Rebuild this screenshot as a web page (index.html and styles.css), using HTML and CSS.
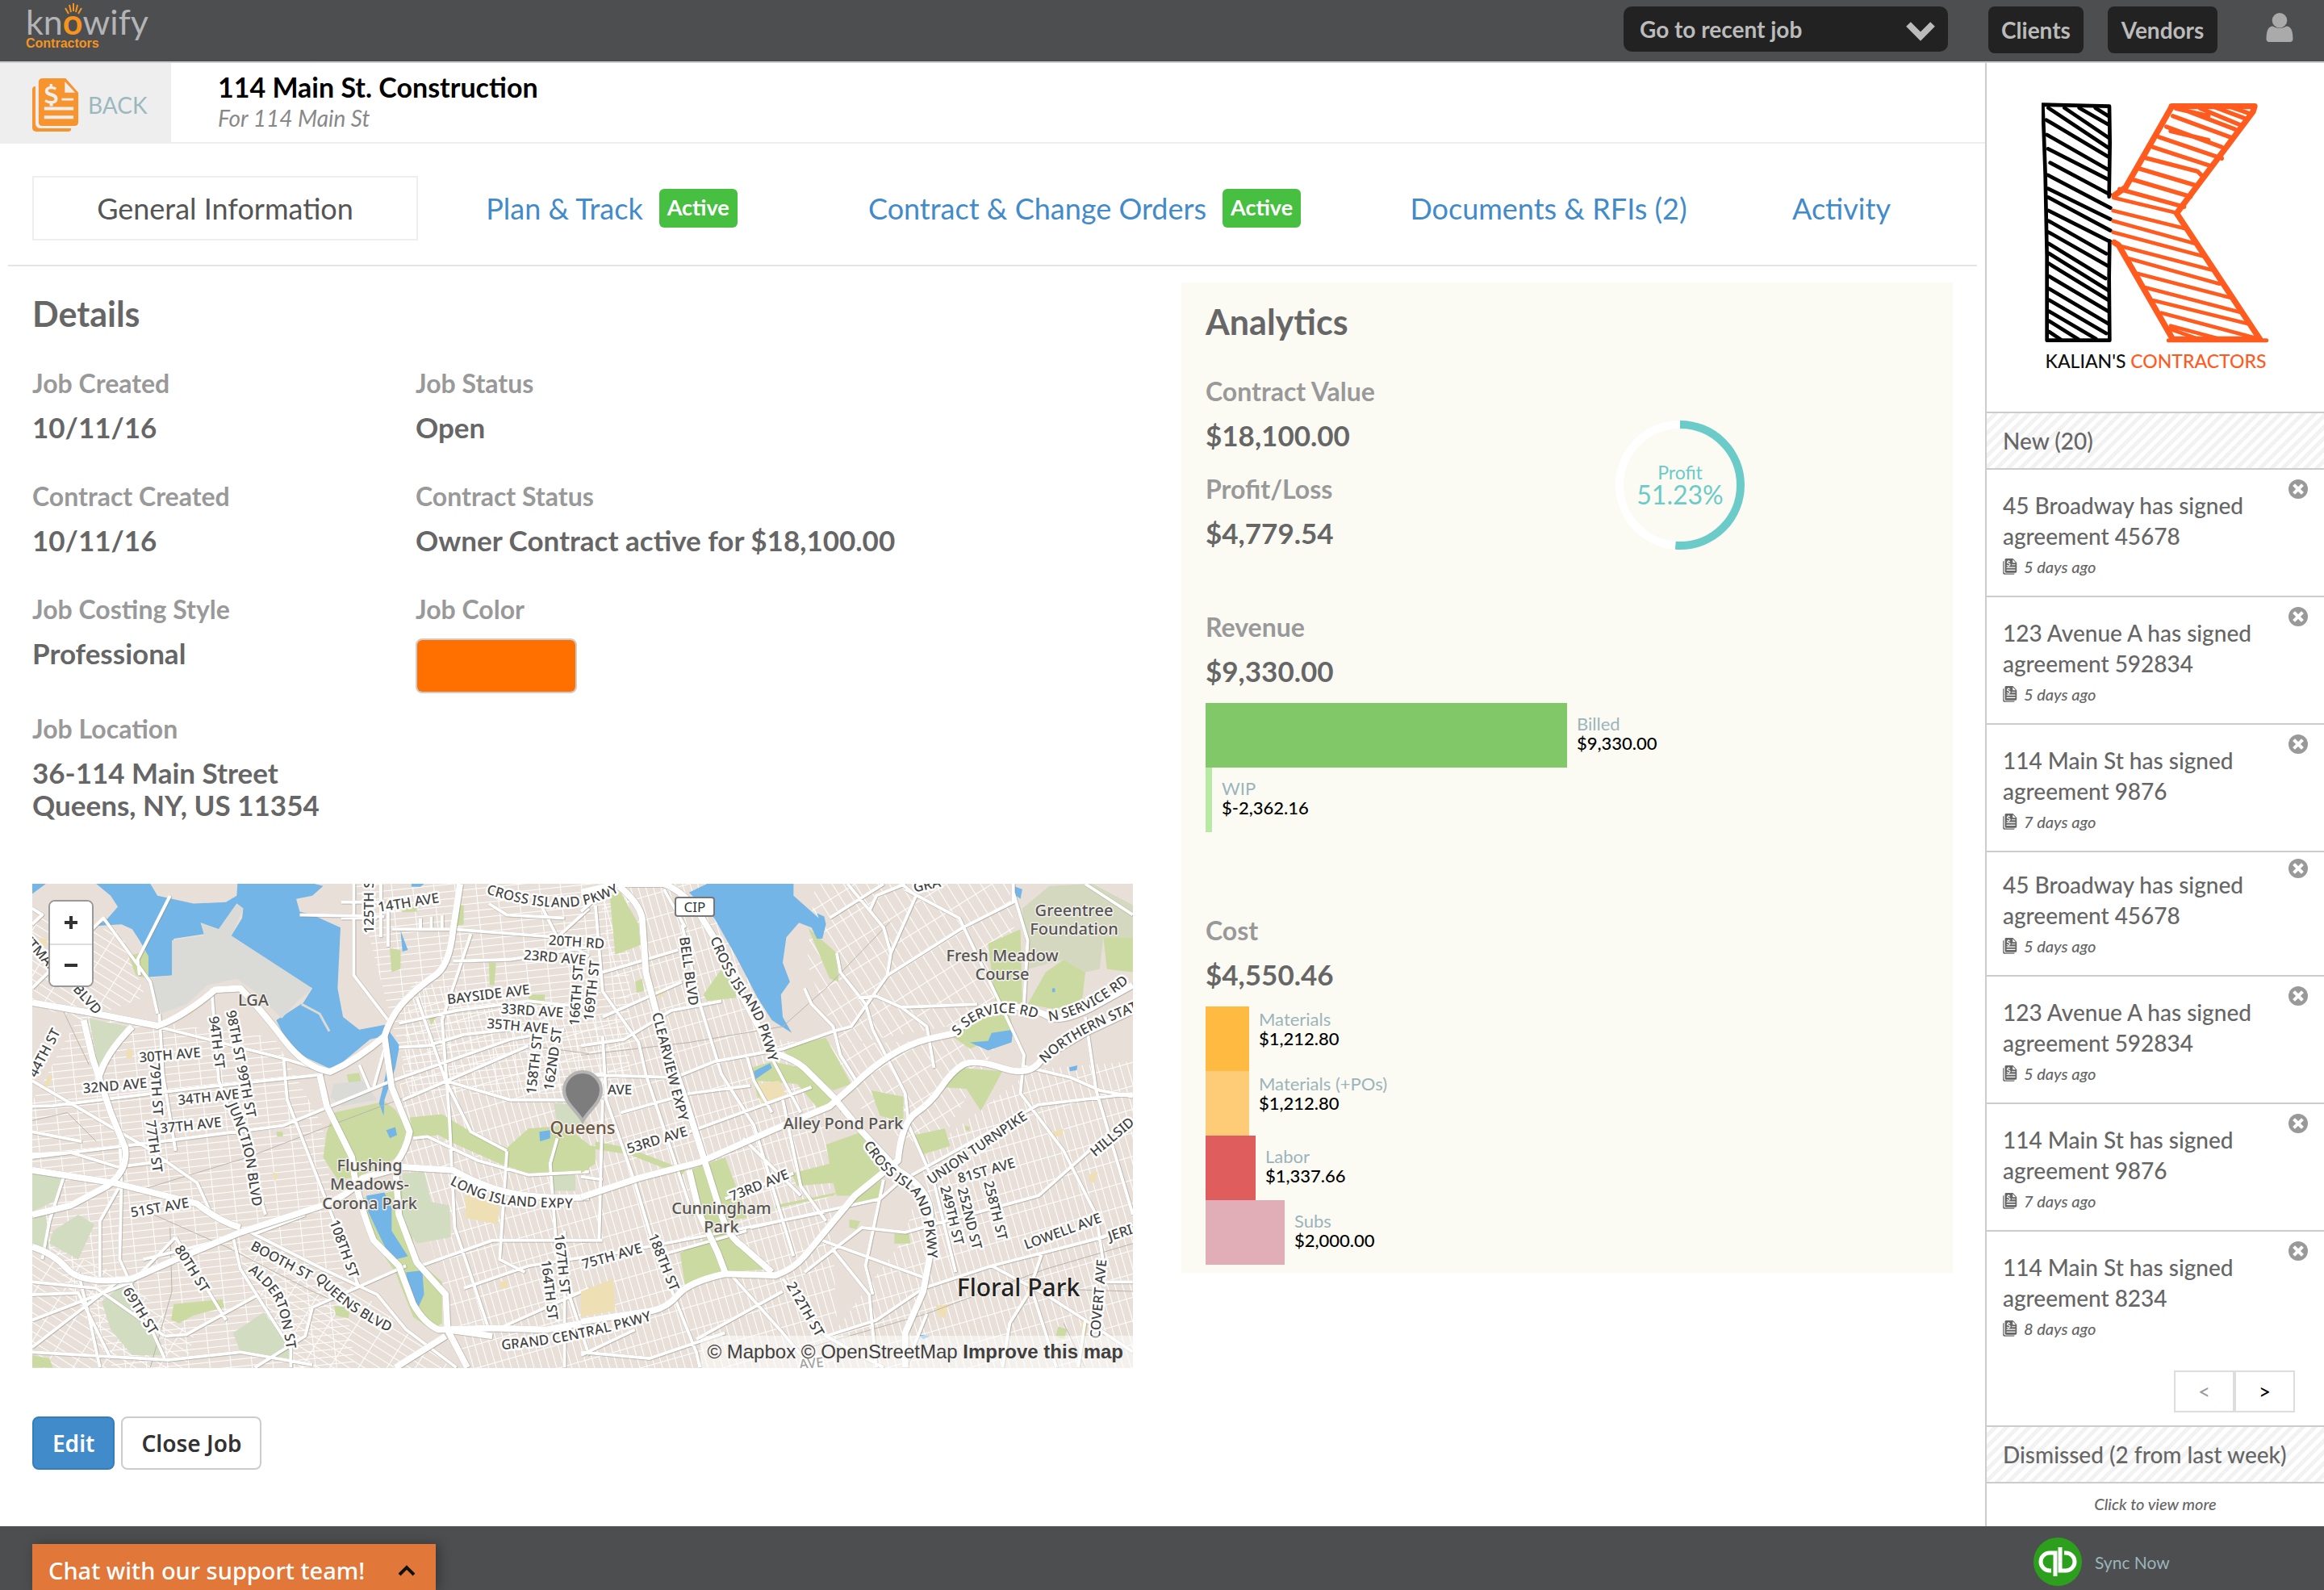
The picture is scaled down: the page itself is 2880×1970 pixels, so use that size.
FILE: index.html
```html
<!DOCTYPE html>
<html lang="en">
<head>
<meta charset="utf-8">
<title>114 Main St. Construction - Knowify</title>
<link rel="stylesheet" href="styles.css">
</head>
<body>
<svg class="defs" aria-hidden="true">
  <symbol id="doc" viewBox="0 0 60 68">
    <path d="M4 10v46q0 7 7 7h38v1q0 3-4 3H5q-5 0-5-5V14q0-4 4-4z"/>
    <path fill-rule="evenodd" d="M13 0h29l16 18v37q0 5-5 5H13q-5 0-5-5V5q0-5 5-5zM41 4v14h13zM37 25v3h15v-3zM15 36v4h37v-4zM15 47v4h37v-4zM22 7v3q-6 1-6 6 0 5 7 6.500 5 1.500 5 3.500 0 2.500-4 2.500t-7-2l-1.500 3q3 2 6.500 2.500v3h4v-3q6-1 6-6.500 0-5-7-7-5-1-5-3 0-2 3.500-2t5.500 1.500l1.500-3q-2-1.500-5-2v-3z"/>
  </symbol>
  <symbol id="close" viewBox="0 0 24 24">
    <circle cx="12" cy="12" r="12" fill="#999"/>
    <path d="M8 8l8 8M16 8l-8 8" stroke="#fff" stroke-width="4" stroke-linecap="square"/>
  </symbol>
</svg>

<header class="topbar">
  <a class="brand" href="#" aria-label="Knowify Contractors">
    <span class="brand-name">kn<span class="brand-o">o<svg class="brand-rays" viewBox="0 0 24 14"><path d="M2 6l4 7M7 2l2 9M12 0v10M17 2l-2 9M22 6l-4 7" stroke="#f7941e" stroke-width="2" fill="none"/></svg></span>wify</span>
    <span class="brand-sub">Contractors</span>
  </a>
  <nav class="topnav">
    <div class="jobs">
      <select class="jobs-select" aria-label="Go to recent job"><option>Go to recent job</option></select>
      <svg class="jobs-arrow" viewBox="0 0 36 24"><path d="M3 3l15 15L33 3" fill="none" stroke="#bbb" stroke-width="8"/></svg>
    </div>
    <button class="topbtn clients">Clients</button>
    <button class="topbtn vendors">Vendors</button>
    <a class="user" href="#" aria-label="Account"><svg viewBox="0 0 32 35"><path d="M0 32c0-8 1-16 8-16 4 3 12 3 16 0 7 0 8 8 8 16 0 2-2 3-4 3H4c-2 0-4-1-4-3z"/><ellipse cx="16" cy="9" rx="9" ry="9"/></svg></a>
  </nav>
</header>

<div class="page">
  <main class="main">
    <div class="jobhead">
      <a class="back" href="#"><svg class="back-icon"><use href="#doc"/></svg>BACK</a>
      <div class="jobtitle">
        <h1>114 Main St. Construction</h1>
        <p>For 114 Main St</p>
      </div>
    </div>

    <nav class="tabs">
      <a class="tab tab-on" href="#">General Information</a>
      <a class="tab" href="#">Plan &amp; Track <span class="badge">Active</span></a>
      <a class="tab" href="#">Contract &amp; Change Orders <span class="badge">Active</span></a>
      <a class="tab" href="#">Documents &amp; RFIs (2)</a>
      <a class="tab" href="#">Activity</a>
    </nav>

    <div class="columns">
      <section class="details">
        <h2>Details</h2>
        <dl class="facts">
          <div><dt>Job Created</dt><dd>10/11/16</dd></div>
          <div><dt>Job Status</dt><dd>Open</dd></div>
          <div><dt>Contract Created</dt><dd>10/11/16</dd></div>
          <div><dt>Contract Status</dt><dd>Owner Contract active for $18,100.00</dd></div>
          <div><dt>Job Costing Style</dt><dd>Professional</dd></div>
          <div><dt><label for="color">Job Color</label></dt><dd><input class="swatch" id="color" type="color" value="#ff7000"></dd></div>
        </dl>
        <dl class="location"><dt>Job Location</dt><dd>36-114 Main Street<br>Queens, NY, US 11354</dd></dl>

        <div class="map">
          <svg class="map-art" viewBox="0 0 1364 600" preserveAspectRatio="xMidYMid slice">
            <defs>
              <pattern id="g1" width="26" height="9" patternUnits="userSpaceOnUse" patternTransform="rotate(-6)"><path d="M0 0H26M0 0V9" stroke="#fff" stroke-width="2" fill="none"/></pattern>
              <pattern id="g2" width="9" height="28" patternUnits="userSpaceOnUse" patternTransform="rotate(-16)"><path d="M0 0H9M0 0V28" stroke="#fff" stroke-width="2" fill="none"/></pattern>
              <pattern id="g3" width="30" height="10" patternUnits="userSpaceOnUse" patternTransform="rotate(32)"><path d="M0 0H30M0 0V10" stroke="#fff" stroke-width="2" fill="none"/></pattern>
              <pattern id="g4" width="12" height="30" patternUnits="userSpaceOnUse" patternTransform="rotate(-32)"><path d="M0 0H12M0 0V30" stroke="#fff" stroke-width="2" fill="none"/></pattern>
            </defs>
            <rect width="1364" height="600" fill="#e8e0d8"/>
            <!-- side-street grids -->
            <path fill="url(#g1)" d="M60 160L300 190 360 300 400 600H100L0 420V270zM400 0H740V260H470L440 150z"/>
            <path fill="url(#g2)" d="M470 120L740 170 980 200 1000 600H540L450 300zM700 0H860L920 220H740z"/>
            <path fill="url(#g3)" d="M0 40L110 60 140 140 60 170 0 150zM0 440L100 480 200 560 190 600H0zM240 440L400 500 520 600H330z"/>
            <path fill="url(#g4)" d="M970 0L1210 0 1230 160 1000 200 960 100zM980 200L1200 190 1120 330 1040 300z"/>
            <path fill="url(#g2)" d="M1110 330L1240 230 1364 220V600H960L1080 440z"/>

            <!-- western half -->
            <g class="geo" transform="translate(-10 -9) scale(.4464 .3954)">
              <g class="park">
                <path d="M860 740L1000 705 1030 730 1070 800 1050 870 1020 890 930 940 870 950 830 880 840 800zM1070 755L1160 745 1240 800 1340 850 1400 790 1500 780 1568 840V930H1400L1320 900 1200 840 1150 810 1080 820z"/>
                <path d="M930 1010L1050 980 1090 1200 1160 1270V1400L1130 1420 1080 1380 1030 1240 970 1140zM415 1340L550 1325 555 1350 470 1375 430 1400 408 1390zM1015 225L1045 230V290L1020 300zM1290 270H1310L1305 340H1292zM290 250L345 230 345 320 310 310zM1120 435L1150 430 1130 465zM895 620L930 615 940 660 910 685zM860 1345L905 1350 900 1385 865 1375zM700 800H718V815H702zM22 1500L70 1510 80 1539H22zM1400 370H1445V390H1400zM1220 90V150L1200 155 1205 90zM1040 85L1090 90V110L1050 112z"/>
              </g>
              <g class="cemetery">
                <path d="M180 445L285 470 230 560 205 590zM22 930L110 940 100 1010 22 1050zM22 1055L60 1050 70 1180 22 1150zM80 1110L150 1060 195 1090 150 1200 70 1150zM215 1330L275 1280 380 1460V1500H300L240 1420zM580 1430L665 1365 740 1480 735 1510 600 1490zM1050 930L1110 925 1130 1020 1180 1030 1185 1130 1090 1150 1050 1080zM1465 935H1530V985H1465zM1470 710L1530 715 1568 780H1480z"/>
              </g>
              <path class="sand" d="M1225 990L1320 1010 1315 1090 1225 1070zM45 190L65 200 55 220 42 212zM285 540H300V570H283zM690 925L708 935 695 955zM1320 1270L1345 1265 1340 1290 1322 1292zM65 625H80L65 660 55 658zM440 415L470 410V430H442z"/>
              <path class="water" d="M200 23L240 60 260 95 225 140 195 155 270 150 300 165 320 200 345 250V315L410 310 415 195 500 180 490 145 540 165 590 85 608 100 605 130 575 185 620 240 800 350 775 395 700 450 740 545 845 600 870 595 960 510 1000 500 1015 560 1000 640 985 710 998 750 1000 700 1030 600 1042 530 1010 480 1000 465 930 480 885 440 870 350 878 160 800 120 765 110 755 70 800 60 830 30 805 23z"/>
              <path class="water" d="M950 1000L1000 990 1020 1040V1110L1065 1190 1030 1200 1010 1180 980 1110 955 1050zM1060 1240L1105 1235 1110 1310 1090 1360 1070 1310zM1005 795L1030 785 1035 810 1015 820zM1430 800L1460 795V820L1432 830zM22 23H60L22 55zM1045 170L1065 230 1050 235zM1075 23H1110L1100 32H1075z"/>
              <path class="land" d="M350 23L370 60 470 85 560 80 590 60 592 23z"/>
              <path class="airport" d="M410 200L500 185 490 145 540 165 590 85 608 100 575 185 800 350 750 400 715 445 640 360 590 320 510 340 450 400 380 430 350 320 410 310z"/>
              <path class="airport" d="M860 650L940 640 980 700 880 720 850 690z"/>
              <path class="pier" d="M770 400L820 430 847 485"/>
              <path class="rail" d="M22 765L120 740 200 830M330 980L620 880 920 750 1180 640 1400 530 1568 555M340 1050L560 1160 800 1300 980 1390M110 425L180 590M405 1100L410 1300 350 1539"/>
              <g class="minor">
                <path d="M22 720L80 718 460 665 830 620M22 880L380 830 720 780 1020 640 1350 510 1500 480M370 470L720 570 850 615M375 430L385 620 420 860M520 350L540 640 640 950 670 1060M720 570L730 700 850 1050 930 1290M22 640L340 850 480 960 520 1060M22 350L220 130 350 330 370 430M22 100L50 120 22 150M320 310L315 260 405 60M915 23V310L1010 450M765 120L1000 125M1020 165H1190L1480 190 1568 250M1190 265L1350 260 1568 220M1040 460L1200 420 1400 390 1568 410M1040 535L1120 530 1220 495 1420 470M1090 380L1170 640 1240 800 1340 860M1170 640L1350 700H1568M1080 820L1120 815 1260 890 1400 935 1568 925M1240 180L1160 450 1180 750 1195 1100 1290 1420M1340 860L1320 1200 1390 1240M1480 820L1460 900 1480 1200 1568 1500M1050 700L1400 530M970 660L1000 540M930 590L960 670M1100 1220L1300 1140 1568 1140M1220 1290L1400 1220 1568 1190M1310 1420L1568 1290M580 1130L600 1230 740 1480V1539M620 1110L830 1230 980 1310 1060 1420 1200 1539M22 1490L400 1515 600 1490 800 1530M22 1390L300 1270 420 1130M22 1270L200 1290 390 1440M50 1200L70 1080 110 940M210 1260V1080L270 960 265 820M22 1475L270 1260M270 960L265 1200 390 1510M420 1130L560 1390M390 1440L450 1435 650 1310M640 1539L780 1440 800 1350 1060 1220M150 1240L180 1380 210 1539M22 1310L150 1305 240 1510M1290 85L1340 120 1500 130M1430 80L1480 190M1480 190L1568 100M22 870L130 865 260 910 400 890M22 800L160 830M1500 1110V1539M330 1200L580 1130M640 1120L780 1060M880 80H1000M880 130H980M990 23V190M1010 100V220M1100 130V160M1130 125V160M1160 120V160"/>
              </g>
              <g class="hw">
                <path d="M22 395L200 430 370 468Q440 440 530 355L600 350Q660 420 720 510T850 612Q930 570 1000 500 1020 430 1060 385T1140 310 1190 170L1210 23"/>
                <path d="M22 920L250 960 480 1025Q540 1080 600 1100M22 1160Q80 1180 120 1230T300 1260L420 1200 600 1115 830 1030Q900 1000 940 945L1050 910 1190 920Q1300 990 1400 1000T1568 1005"/>
                <path d="M1000 500L1020 660 1070 800Q1060 860 1030 900L1040 1060 1090 1210 1170 1310 1175 1420 1230 1539"/>
                <path d="M820 620L840 720 910 880Q920 1000 970 1140L1040 1220 1080 1340Q1110 1400 1150 1420L1300 1415 1450 1420 1568 1395"/>
                <path d="M22 1060L130 1030 230 970Q290 920 280 850L240 740 190 570 165 450M205 640Q220 560 300 470"/>
                <path d="M1030 1539L1170 1440M1175 1420L1300 1440"/>
              </g>
            </g>
            <!-- eastern half -->
            <g class="geo" transform="translate(680 -9) scale(.4464 .3954)">
              <g class="park">
                <path d="M555 540L680 505 750 650 700 670 620 600zM470 600L530 580 620 600 700 700 660 730 600 650 490 640 530 740 490 690zM680 840L780 800 870 890 760 1000 710 1000 700 960 600 970 585 930 690 900zM80 60L110 50 160 150 165 215 95 245zM300 920L400 880 440 1000 460 1070 400 1080 430 1130 530 1230 400 1240 290 1290 275 1180 355 1130zM40 830L130 850 290 920 280 935 130 870 40 855z"/>
                <path d="M1130 210L1220 165 1225 400 1150 390zM1290 300L1340 260 1400 300 1390 400 1310 415 1240 400zM1450 190H1532V300L1460 290zM1030 500L1080 430H1190L1200 480 1080 540zM1000 660L1060 600 1170 610 1110 735 1070 665zM805 670L895 690V770L830 750zM925 810L1010 790 1025 845 950 870zM340 370L390 290 430 320V380L350 390zM630 160L710 240 715 330 690 320zM540 1030L710 990 700 1000 540 1040zM870 1120H910L915 1150H870zM745 1075L775 1080 765 1105 745 1100zM0 840L40 845V900L0 930zM1065 780L1080 785 1078 797 1068 795zM1325 1410L1350 1420 1340 1450 1318 1440zM740 1030L835 950 830 1005zM150 330L170 320 175 360 155 365z"/>
              </g>
              <path class="golf" d="M1225 100L1300 30 1420 23 1532 90V190L1450 190 1440 290 1400 300 1340 260 1240 290z"/>
              <path class="sand" d="M490 650L550 640 570 690 500 710zM0 1300L90 1260 95 1360 0 1380zM210 350L235 360 225 378 208 372zM985 1345L1020 1340 1010 1385 990 1375zM1310 800L1340 790 1335 810 1312 818zM1415 930L1435 925 1425 960 1408 955zM1390 1390L1410 1400 1400 1440H1388z"/>
              <path class="water" d="M300 50L350 23H590V60L660 130 655 115 675 125 680 150 670 195 655 195 640 160 605 145 570 190 560 270 580 330 555 370 560 440 585 490 530 450 490 380 430 250 370 130zM480 610L525 585 530 600 485 635zM1080 520L1130 515 1140 490 1200 480 1195 520 1130 545zM1355 598L1378 592 1376 607 1357 610zM1200 30L1225 40 1220 70 1208 60zM718 710L730 730 720 738zM935 1435L970 1440 950 1450zM1308 350H1316V362H1308z"/>
              <path class="rail" d="M0 560L300 520 560 470 680 350 860 140M620 1480L960 1370 1290 1230 1532 1150M1240 1290L1532 1300M1400 1539L1340 1400"/>
              <g class="minor">
                <path d="M0 530L120 510 250 420 390 390M60 300L270 230M40 90L60 360 160 520 180 620 310 1060M0 620L260 630 370 580 560 540 700 485 750 470 850 310 860 240 840 160 740 23M60 440L280 330M280 150L330 400 390 620 480 780 590 1190M110 740L300 680 470 655M460 560L480 640 530 740M530 570L610 740M300 800L640 660M400 1010L590 930M0 940L60 950M60 500L70 700 150 960 200 1150 320 1490 330 1539M470 1100L830 1010 880 960M0 1140L60 1140M60 700L50 1140M0 1200L370 1120 680 1050M240 1180L460 1110M450 820L610 1000M560 700L610 970 680 1080M150 1420L0 1500M320 1450L560 1300M410 1240L560 1430 640 1539M560 1260L680 1440 840 1539M620 1240L780 1100 900 1115 1010 1080 1270 1000 1440 830 1532 760M670 1140L960 1260M680 1440L820 1390 950 1290 1140 1220 1450 1130 1532 1090M840 950L790 1220 810 1310M700 1170L800 1310 820 1539M620 350L640 400 700 470 720 560 770 650M710 240L720 300 790 400 810 480 900 680 910 780 980 960 1040 1240M690 130L840 23M860 240L930 60 890 23M850 310L1060 160 1200 80 1200 23M900 40L1050 130 1160 390M770 380L820 375 890 410 1100 400M890 410L960 470 980 600M1200 50L1240 200 1230 400M1160 390L1230 560 1220 680 1340 860 1430 1060 1450 1210M1230 740L1270 715 1532 680M1230 595L1360 630 1440 670 1532 690M1400 440L1430 670 1532 1060M880 960L1230 740M1140 1220L1290 1310 1400 1390 1532 1490M1280 1180L1240 1310 1190 1400 1170 1539M1250 1290L1320 1539M1400 1390L1380 1539M900 1539L960 1370M1400 23L1532 120M1450 1270H1532M800 110L820 60 900 23M230 40L290 160M0 110L50 60M0 1490L190 1510 400 1430"/>
              </g>
              <g class="hw">
                <path d="M0 1005L160 945 330 895 540 790 690 720 760 650Q860 540 960 510L1040 490Q1090 430 1130 415T1220 410 1300 440 1420 410L1532 340"/>
                <path d="M0 1395L200 1360Q240 1350 270 1310T400 1245L540 1250Q590 1230 620 1190L760 1000 880 890Q890 770 930 740T1000 660 1060 590 1170 600 1280 570L1400 490 1532 420"/>
                <path d="M105 30Q160 80 170 130L180 300 215 450 290 700 340 880 390 1060Q410 1130 450 1160L530 1240M300 920L330 1060 380 1180 400 1240"/>
                <path d="M0 50L105 23H230Q290 50 330 120L390 230 450 380 530 550Q590 570 620 600L700 690 780 800 880 920Q970 980 970 1060V1180L950 1300 900 1430V1539"/>
              </g>
            </g>

            <defs>
              <path id="t1" d="M562 12Q615 29 655 29T730 8"/>
              <path id="t2" d="M242 274Q262 320 266 352T274 402"/>
              <path id="t3" d="M517 372Q560 396 600 399T685 402"/>
              <path id="t4" d="M267 480Q300 505 306 530T315 575"/>
              <path id="t5" d="M350 489Q390 535 460 563"/>
              <path id="t6" d="M582 577Q660 572 770 540"/>
              <path id="t7" d="M768 161L808 320"/>
              <path id="t8" d="M840 68Q860 120 880 142T916 235"/>
              <path id="t9" d="M1030 323Q1052 360 1080 375T1110 470"/>
              <path id="t10" d="M1114 373L1250 280"/>
              <path id="t11" d="M1255 223Q1292 184 1384 152"/>
              <path id="t12" d="M1147 189Q1183 145 1248 168"/>
              <path id="t13" d="M1260 170Q1310 164 1366 116"/>
            </defs>
            <g class="street">
              <text><textPath href="#t1">CROSS ISLAND PKWY</textPath></text>
              <text><textPath href="#t2">JUNCTION BLVD</textPath></text>
              <text><textPath href="#t3">LONG ISLAND EXPY</textPath></text>
              <text><textPath href="#t4">ALDERTON ST</textPath></text>
              <text><textPath href="#t5">QUEENS BLVD</textPath></text>
              <text><textPath href="#t6">GRAND CENTRAL PKWY</textPath></text>
              <text><textPath href="#t7">CLEARVIEW EXPY</textPath></text>
              <text><textPath href="#t8">CROSS ISLAND PKWY</textPath></text>
              <text><textPath href="#t9">CROSS ISLAND PKWY</textPath></text>
              <text><textPath href="#t10">UNION TURNPIKE</textPath></text>
              <text><textPath href="#t11">NORTHERN STATE</textPath></text>
              <text><textPath href="#t12">S SERVICE RD</textPath></text>
              <text><textPath href="#t13">N SERVICE RD</textPath></text>
              <g text-anchor="middle">
                <text transform="translate(423 24) rotate(-90)">125TH ST</text>
                <text transform="translate(467 29) rotate(-9)">14TH AVE</text>
                <text transform="translate(674 78) rotate(4)">20TH RD</text>
                <text transform="translate(647 97) rotate(5)">23RD AVE</text>
                <text transform="translate(566 143) rotate(-7)">BAYSIDE AVE</text>
                <text transform="translate(619 163) rotate(4)">33RD AVE</text>
                <text transform="translate(601 182) rotate(5)">35TH AVE</text>
                <text transform="translate(680 139) rotate(-86)">166TH ST</text>
                <text transform="translate(699 133) rotate(-84)">169TH ST</text>
                <text transform="translate(628 224) rotate(-84)">158TH ST</text>
                <text transform="translate(651 218) rotate(-82)">162ND ST</text>
                <text transform="translate(223 197) rotate(83)">94TH ST</text>
                <text transform="translate(253 224) rotate(79)">98TH ST 99TH ST</text>
                <text transform="translate(171 218) rotate(-5)">30TH AVE</text>
                <text transform="translate(103 256) rotate(-5)">32ND AVE</text>
                <text transform="translate(219 270) rotate(-6)">34TH AVE</text>
                <text transform="translate(197 305) rotate(-6)">37TH AVE</text>
                <text transform="translate(148 255) rotate(86)">79TH ST</text>
                <text transform="translate(145 326) rotate(82)">77TH ST</text>
                <text transform="translate(20 212) rotate(-62)">44TH ST</text>
                <text transform="translate(6 90) rotate(48)">DITMARS</text>
                <text transform="translate(64 147) rotate(48)">BLVD</text>
                <text transform="translate(159 407) rotate(-10)">51ST AVE</text>
                <text transform="translate(193 480) rotate(58)">80TH ST</text>
                <text transform="translate(129 532) rotate(58)">69TH ST</text>
                <text transform="translate(306 472) rotate(28)">BOOTH ST</text>
                <text transform="translate(381 454) rotate(70)">108TH ST</text>
                <text transform="translate(651 472) rotate(84)">167TH ST</text>
                <text transform="translate(635 504) rotate(83)">164TH ST</text>
                <text transform="translate(720 467) rotate(-16)">75TH AVE</text>
                <text transform="translate(777 471) rotate(68)">188TH ST</text>
                <text transform="translate(953 530) rotate(60)">212TH ST</text>
                <text transform="translate(903 379) rotate(-22)">73RD AVE</text>
                <text transform="translate(776 323) rotate(-17)">53RD AVE</text>
                <text transform="translate(728 261)">AVE</text>
                <text transform="translate(808 109) rotate(82)">BELL BLVD</text>
                <text transform="translate(1184 361) rotate(-16)">81ST AVE</text>
                <text transform="translate(1134 412) rotate(76)">249TH ST</text>
                <text transform="translate(1156 416) rotate(76)">252ND ST</text>
                <text transform="translate(1188 406) rotate(76)">258TH ST</text>
                <text transform="translate(1279 436) rotate(-20)">LOWELL AVE</text>
                <text transform="translate(1350 438) rotate(-18)">JERI</text>
                <text transform="translate(1327 515) rotate(-85)">COVERT AVE</text>
                <text transform="translate(1342 318) rotate(-40)">HILLSID</text>
                <text transform="translate(1110 7) rotate(-12)">GRA</text>
                <text transform="translate(966 600) rotate(-6)">AVE</text>
              </g>
            </g>
            <g class="place" text-anchor="middle">
              <text x="274" y="151">LGA</text>
              <text x="418" y="356">Flushing</text><text x="418" y="379">Meadows-</text><text x="418" y="403">Corona Park</text>
              <text x="854" y="409">Cunningham</text><text x="854" y="432">Park</text>
              <text x="1005" y="304">Alley Pond Park</text>
              <text x="1291" y="40">Greentree</text><text x="1291" y="63">Foundation</text>
              <text x="1202" y="96">Fresh Meadow</text><text x="1202" y="119">Course</text>
              <text class="town" x="1222" y="511">Floral Park</text>
              <text class="area" x="682" y="310">Queens</text>
            </g>
            <rect x="797" y="17" width="48" height="23" rx="3" fill="#fff" stroke="#777" stroke-width="2"/>
            <text class="shield" x="821" y="35" text-anchor="middle">CIP</text>
            <path d="M682 294C674 280 659 271 659 256a23 23 0 0 1 46 0C705 271 690 280 682 294z" fill="#7d7d7d" stroke="#b4b4b4" stroke-width="4"/>
          </svg>
          <div class="zoom"><button aria-label="Zoom in"><svg viewBox="0 0 16 16"><path d="M8 0v16M0 8h16"/></svg></button><button aria-label="Zoom out"><svg viewBox="0 0 16 16"><path d="M0 8h16"/></svg></button></div>
          <div class="credit"><a href="#">© Mapbox</a> <a href="#">© OpenStreetMap</a> <a href="#"><b>Improve this map</b></a></div>
        </div>

        <div class="actions">
          <button class="btn btn-primary">Edit</button>
          <button class="btn">Close Job</button>
        </div>
      </section>

      <section class="analytics">
        <h2>Analytics</h2>
        <div class="summary">
          <dl class="stats">
            <div><dt>Contract Value</dt><dd>$18,100.00</dd></div>
            <div><dt>Profit/Loss</dt><dd>$4,779.54</dd></div>
          </dl>
          <div class="donut">
            <svg viewBox="0 0 160 160"><circle cx="80" cy="80" r="75" fill="none" stroke="#fff" stroke-width="10"/><circle cx="80" cy="80" r="75" fill="none" stroke="#6bcbc9" stroke-width="10" pathLength="100" stroke-dasharray="51.23 100" transform="rotate(-90 80 80)"/></svg>
            <p><span>Profit</span>51.23%</p>
          </div>
        </div>
        <dl class="total"><dt>Revenue</dt><dd>$9,330.00</dd></dl>
        <ul class="bars">
          <li><i style="width:448px;background:#80c868"></i><p>Billed<b>$9,330.00</b></p></li>
          <li><i style="width:8px;background:#b7e8a4"></i><p>WIP<b>$-2,362.16</b></p></li>
        </ul>
        <dl class="total total-cost"><dt>Cost</dt><dd>$4,550.46</dd></dl>
        <ul class="bars">
          <li class="high"><i style="width:54px;background:#ffbb41"></i><p>Materials<b>$1,212.80</b></p></li>
          <li class="high"><i style="width:54px;background:#fecb76"></i><p>Materials (+POs)<b>$1,212.80</b></p></li>
          <li><i style="width:62px;background:#e05d5d"></i><p>Labor<b>$1,337.66</b></p></li>
          <li><i style="width:98px;background:#e1aeb7"></i><p>Subs<b>$2,000.00</b></p></li>
        </ul>
      </section>
    </div>
  </main>

  <aside class="side">
    <div class="company">
      <svg viewBox="60 50 849 894" role="img" aria-label="Kalian's Contractors" stroke-linecap="round" stroke-linejoin="round" fill="none">
        <g stroke="#000" stroke-width="14">
          <path d="M311 400L314 200 312 64 64 58 68 150 74 320 80 620V934H313L311 700 313 565"/>
          <path d="M260 70L308 100M200 70L308 132M145 70L308 180M85 70L308 218M78 115L308 252M80 170L308 300M84 222L308 336M92 274L314 392M84 320L316 442M84 370L316 484M84 402L316 526M86 452L316 568M86 490L300 612M86 532L308 658M86 574L298 704M86 610L308 748M86 648L308 784M88 696L308 826M88 742L308 872M88 784L300 908M88 826L262 928M88 862L196 930M88 902L130 930"/>
        </g>
        <g stroke="#ff5b1f">
          <path stroke-width="22" d="M330 396L372 366 545 64H852L846 84 562 462 872 930H548L346 580 330 570"/>
          <path stroke-width="14" d="M328 404L568 462M326 452L600 520M326 490L630 574M326 532L664 622M340 580L690 672M384 630L722 724M418 686L764 776M446 738L800 830M476 786L826 872M506 832L850 924M540 880L720 928M532 890L640 928"/>
          <path stroke-width="16" d="M350 372L590 438M390 334L614 400M418 294L640 360M446 256L640 306 664 330M474 216L690 286M496 178L730 258M524 140L730 216M548 100L770 182M560 66L780 150M650 72L800 134M700 66L824 112M760 66L836 92M560 72L680 100M540 156L680 190"/>
          <path stroke-width="15" d="M540 62H854M532 934H896"/>
        </g>
      </svg>
      <p class="company-name">KALIAN'S <span>CONTRACTORS</span></p>
    </div>
    <h3>New (20)</h3>
    <ul class="news">
      <li><p>45 Broadway has signed agreement 45678</p><small><svg><use href="#doc"/></svg>5 days ago</small><button aria-label="Dismiss"><svg><use href="#close"/></svg></button></li>
      <li><p>123 Avenue A has signed agreement 592834</p><small><svg><use href="#doc"/></svg>5 days ago</small><button aria-label="Dismiss"><svg><use href="#close"/></svg></button></li>
      <li><p>114 Main St has signed agreement 9876</p><small><svg><use href="#doc"/></svg>7 days ago</small><button aria-label="Dismiss"><svg><use href="#close"/></svg></button></li>
      <li class="tight"><p>45 Broadway has signed agreement 45678</p><small><svg><use href="#doc"/></svg>5 days ago</small><button aria-label="Dismiss"><svg><use href="#close"/></svg></button></li>
      <li><p>123 Avenue A has signed agreement 592834</p><small><svg><use href="#doc"/></svg>5 days ago</small><button aria-label="Dismiss"><svg><use href="#close"/></svg></button></li>
      <li><p>114 Main St has signed agreement 9876</p><small><svg><use href="#doc"/></svg>7 days ago</small><button aria-label="Dismiss"><svg><use href="#close"/></svg></button></li>
      <li><p>114 Main St has signed agreement 8234</p><small><svg><use href="#doc"/></svg>8 days ago</small><button aria-label="Dismiss"><svg><use href="#close"/></svg></button></li>
    </ul>
    <div class="pager"><button class="off">&lt;</button><button>&gt;</button></div>
    <h3>Dismissed (2 from last week)</h3>
    <a class="more" href="#">Click to view more</a>
  </aside>
</div>

<footer class="footer">
  <button class="chat">Chat with our support team!<svg viewBox="0 0 22 14"><path d="M2 12l9-9 9 9" fill="none" stroke="#111" stroke-width="4"/></svg></button>
  <a class="sync" href="#"><svg viewBox="0 0 60 60"><circle cx="30" cy="30" r="30" fill="#2ca01c"/><path d="M22 41h-2a11 11 0 0 1 0-22h7v29M38 19h2a11 11 0 0 1 0 22h-7V12" fill="none" stroke="#fff" stroke-width="5"/></svg>Sync Now</a>
</footer>
</body>
</html>
```
FILE: styles.css
```css
* { box-sizing: border-box; }
body {
  margin: 0;
  min-height: 100vh;
  display: flex;
  flex-direction: column;
  font-family: Lato, "Open Sans", sans-serif;
  color: #666;
  background: #fff;
}
h1, h2, h3, p, dl, dd, ul { margin: 0; padding: 0; }
ul { list-style: none; }
a { color: inherit; text-decoration: none; }
button, select, input { font: inherit; margin: 0; }
.defs { position: absolute; width: 0; height: 0; }

/* top bar */
.topbar {
  height: 78px;
  display: flex;
  justify-content: space-between;
  padding: 0 38px 0 32px;
  background: #4d4e50;
  border-bottom: 2px solid #ccc;
}
.brand { display: flex; flex-direction: column; color: #b3b4b6; }
.brand-name { font-size: 43px; line-height: 54px; height: 43px; }
.brand-o { position: relative; color: #f7941e; font-weight: 700; }
.brand-rays { position: absolute; left: 1px; top: 3px; width: 24px; height: 14px; }
.brand-sub { font: 700 16px/22px "Liberation Sans", sans-serif; color: #f7941e; }
.topnav { display: flex; align-items: flex-start; padding-top: 8px; color: #bbb; font-size: 28px; font-weight: 700; }
.jobs { position: relative; width: 402px; margin-right: 50px; }
.jobs-select {
  width: 100%;
  height: 56px;
  padding: 0 20px;
  appearance: none;
  border: 0;
  border-radius: 10px;
  background: #222;
  color: #bbb;
}
.jobs-arrow { position: absolute; right: 16px; top: 19px; width: 36px; height: 24px; pointer-events: none; }
.topbtn { height: 58px; padding: 0; border: 0; border-radius: 8px; background: #222; color: #bbb; }
.clients { width: 118px; margin-right: 30px; }
.vendors { width: 136px; margin-right: 60px; }
.user { padding-top: 8px; }
.user svg { display: block; width: 34px; height: 36px; fill: #aaa; }

/* page frame */
.page { flex: 1; display: flex; }
.main { flex: 1; min-width: 0; }
.side { width: 420px; border-left: 2px solid #ccc; }

.jobhead { display: flex; height: 100px; border-bottom: 2px solid #eee; }
.back {
  width: 212px;
  height: 100px;
  display: flex;
  align-items: center;
  gap: 10px;
  padding: 4px 0 0 40px;
  background: #eee;
  color: #9bb8be;
  font-size: 28px;
}
.back-icon { width: 59px; height: 67px; fill: #f7942e; }
.jobtitle { padding: 10px 0 0 58px; }
.jobtitle h1 { font-size: 34px; line-height: 40px; font-weight: 700; color: #000; }
.jobtitle p { font-size: 28px; line-height: 36px; font-style: italic; color: #888; }

.tabs {
  display: grid;
  grid-template-columns: 478fr 480fr 692fr 458fr 268fr;
  align-items: center;
  margin: 0 10px;
  padding: 40px 34px 30px 30px;
  border-bottom: 2px solid #e4e4e4;
}
.tab { display: flex; align-items: center; justify-content: center; gap: 20px; height: 80px; font-size: 36px; color: #428bca; white-space: nowrap; }
.tab-on { border: 2px solid #eee; color: #555; }
.badge { height: 48px; padding: 0 10px; border-radius: 6px; background: #47bf41; color: #fff; font-size: 27px; line-height: 46px; font-weight: 700; }

.columns { display: grid; grid-template-columns: 1364fr 956fr; gap: 60px; align-items: start; padding: 0 40px; }
h2 { font-size: 43px; line-height: 50px; font-weight: 700; margin-bottom: 41px; }
dt { font-size: 32px; line-height: 40px; font-weight: 700; color: #999; margin-bottom: 14px; }
dd { font-size: 35px; line-height: 40px; font-weight: 700; }

/* details */
.details { padding-top: 34px; }
.facts { display: grid; grid-template-columns: 475px 1fr; row-gap: 46px; }
.swatch { display: block; width: 200px; height: 68px; margin-top: 16px; padding: 0; appearance: none; border: 2px solid #ccc; border-radius: 8px; overflow: hidden; background: #ff7000; }
.swatch::-webkit-color-swatch-wrapper { padding: 0; }
.swatch::-webkit-color-swatch { border: 0; }
.location { margin-top: 24px; }

.map { position: relative; margin-top: 78px; overflow: hidden; }
.map-art { display: block; width: 100%; height: auto; font-family: "Noto Sans", sans-serif; }
.geo path { vector-effect: non-scaling-stroke; stroke-linejoin: round; }
.park { fill: #cbdaa0; }
.golf { fill: #d3d8bf; }
.cemetery { fill: #d2dcc0; }
.sand { fill: #eee0b4; }
.water { fill: #73b5e6; }
.land { fill: #e8e0d8; }
.airport { fill: #dadad6; }
.pier { fill: none; stroke: #dadad6; stroke-width: 3; }
.rail { fill: none; stroke: #b8b4ae; stroke-width: 1; }
.minor path { fill: none; stroke: #fff; stroke-width: 4; }
.minor, .hw { filter: drop-shadow(1px 1px 1px #8a857c); }
.hw path { fill: none; stroke: #fff; stroke-width: 8; }
.street { font-size: 17px; font-weight: 500; fill: #444; stroke: #fff; stroke-width: 5; paint-order: stroke; stroke-linejoin: round; }
.place { font-size: 20px; font-weight: 500; fill: #555; stroke: #f2eee8; stroke-width: 3; paint-order: stroke; stroke-linejoin: round; }
.town { font-size: 30px; fill: #222; }
.area { font-size: 22px; fill: #6b5644; }
.shield { font-size: 17px; fill: #333; }
.zoom { position: absolute; left: 20px; top: 20px; width: 56px; border: 2px solid #999; border-radius: 8px; background: #fff; overflow: hidden; }
.zoom button { display: flex; align-items: center; justify-content: center; width: 100%; height: 52px; padding: 0; border: 0; background: #fff; }
.zoom button + button { border-top: 2px solid #ddd; }
.zoom svg { width: 16px; height: 16px; fill: none; stroke: #333; stroke-width: 4; }
.credit { position: absolute; right: 0; bottom: 0; padding: 0 12px 0 8px; background: rgba(255, 255, 255, .5); color: #404040; font: 24px/40px "Liberation Sans", sans-serif; }

.actions { display: flex; gap: 8px; padding: 60px 0 70px; }
.btn { height: 66px; padding: 0 23px; border: 2px solid #ccc; border-radius: 8px; background: #fff; color: #333; font: 600 28px/36px "Noto Sans", sans-serif; }
.btn-primary { background: #428bca; border-color: #357ebd; color: #fff; }

/* analytics */
.analytics { margin-top: 20px; padding: 24px 30px 10px; background: #fbfbf4; }
.summary { display: grid; grid-template-columns: 508fr 388fr; }
.stats { display: grid; row-gap: 26px; }
.donut { position: relative; width: 160px; height: 160px; margin-top: 56px; display: flex; align-items: center; justify-content: center; text-align: center; }
.donut svg { position: absolute; inset: 0; }
.donut p { font-size: 32px; line-height: 32px; color: #6bcbc9; }
.donut span { display: block; font-size: 23px; line-height: 24px; }
.total { margin: 76px 0 20px; }
.total-cost { margin-top: 102px; }
.bars li { display: flex; align-items: center; gap: 12px; height: 80px; font-size: 22px; line-height: 24px; color: #9bb4bb; }
.bars i { height: 80px; }
.bars p { padding-bottom: 4px; }
.bars b { display: block; font-weight: 500; color: #000; }
.bars .high p { padding-bottom: 24px; }

/* sidebar */
.company { height: 432px; padding: 49px 0 0 68px; }
.company svg { display: block; width: 283px; height: 298px; }
.company-name { width: 283px; padding-top: 4px; text-align: center; font-size: 23px; line-height: 36px; font-weight: 500; color: #111; white-space: nowrap; }
.company-name span { color: #ff5b1f; }
.side h3 {
  padding: 0 20px;
  border: solid #ccc;
  border-width: 2px 0;
  background: repeating-linear-gradient(135deg, #fff 0 5px, #f2f2f2 5px 10px);
  font-size: 28px;
  line-height: 68px;
  font-weight: 500;
  white-space: nowrap;
}
.news li { position: relative; padding: 25px 40px 23px 20px; }
.news li + li { border-top: 2px solid #ccc; }
.news p { font-size: 28px; line-height: 38px; font-weight: 500; }
.news small { display: flex; align-items: center; gap: 8px; margin-top: 6px; font-size: 20px; line-height: 26px; font-style: italic; font-weight: 500; }
.news small svg { width: 18px; height: 20px; fill: #666; }
.news button { position: absolute; right: 20px; top: 12px; width: 24px; height: 24px; padding: 0; border: 0; background: none; }
.news button svg { display: block; width: 24px; height: 24px; }
.news .tight { padding-top: 21px; }
.news .tight button { top: 8px; }
.pager { display: flex; justify-content: flex-end; padding: 16px 36px; }
.pager button { width: 75px; height: 52px; padding: 0; border: 2px solid #ddd; background: #fff; color: #000; font-size: 26px; }
.pager .off { color: #999; }
.more { display: block; padding-top: 10px; text-align: center; font-size: 20px; line-height: 30px; font-style: italic; font-weight: 500; }

/* footer */
.footer { display: flex; justify-content: space-between; align-items: flex-end; height: 80px; padding-left: 40px; background: #4d4e50; }
.chat { display: flex; align-items: center; justify-content: space-between; width: 500px; height: 58px; padding: 8px 25px 0 20px; border: 0; background: #e2773a; color: #fff; font: 500 29px/40px "Noto Sans", sans-serif; box-shadow: 4px 0 14px rgba(0, 0, 0, .3); }
.chat svg { width: 22px; height: 14px; }
.sync { display: flex; align-items: center; gap: 16px; width: 360px; height: 72px; color: #9bb4bb; font-size: 21px; }
.sync svg { width: 60px; height: 60px; }
```
